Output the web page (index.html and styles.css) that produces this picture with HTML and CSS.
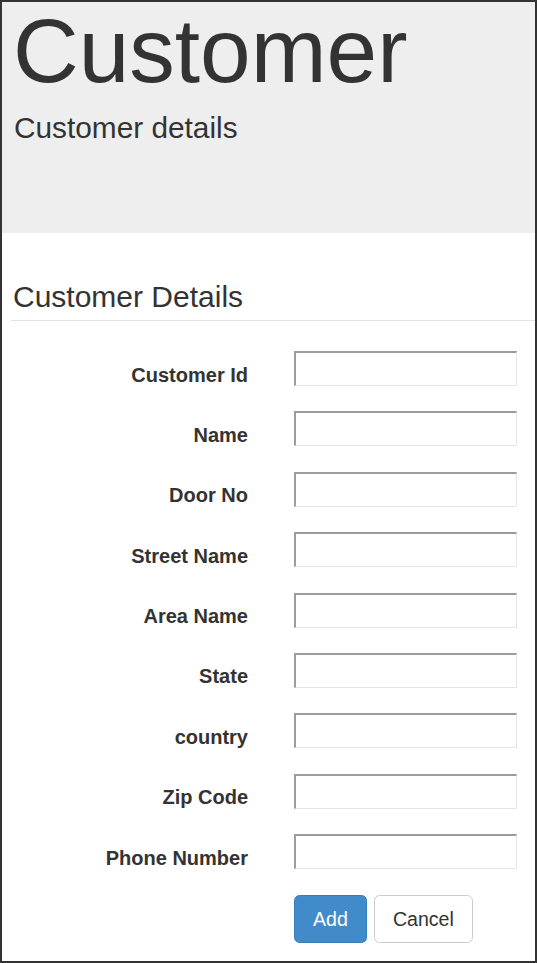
FILE: index.html
```html
<!DOCTYPE html>
<html lang="en">
<head>
    <meta charset="UTF-8">
    <meta name="viewport" content="width=device-width, initial-scale=1.0">
    <title>Customer</title>
    <link rel="stylesheet" href="styles.css">
</head>
<body>
    <div class="page">
        <div class="jumbotron">
            <h1>Customer</h1>
            <p>Customer details</p>
        </div>

        <div class="container">
            <form class="form-horizontal">
                <fieldset>
                    <legend>Customer Details</legend>

                    <div class="form-group">
                        <label class="control-label" for="customerId">Customer Id</label>
                        <input type="text" id="customerId">
                    </div>
                    <div class="form-group">
                        <label class="control-label" for="name">Name</label>
                        <input type="text" id="name">
                    </div>
                    <div class="form-group">
                        <label class="control-label" for="doorNo">Door No</label>
                        <input type="text" id="doorNo">
                    </div>
                    <div class="form-group">
                        <label class="control-label" for="streetName">Street Name</label>
                        <input type="text" id="streetName">
                    </div>
                    <div class="form-group">
                        <label class="control-label" for="areaName">Area Name</label>
                        <input type="text" id="areaName">
                    </div>
                    <div class="form-group">
                        <label class="control-label" for="state">State</label>
                        <input type="text" id="state">
                    </div>
                    <div class="form-group">
                        <label class="control-label" for="country">country</label>
                        <input type="text" id="country">
                    </div>
                    <div class="form-group">
                        <label class="control-label" for="zipCode">Zip Code</label>
                        <input type="text" id="zipCode">
                    </div>
                    <div class="form-group">
                        <label class="control-label" for="phoneNumber">Phone Number</label>
                        <input type="text" id="phoneNumber">
                    </div>

                    <div class="actions">
                        <button type="button" class="btn btn-primary">Add</button>
                        <button type="button" class="btn btn-default">Cancel</button>
                    </div>
                </fieldset>
            </form>
        </div>
    </div>
</body>
</html>
```

FILE: styles.css
```css
html, body {
    margin: 0;
    padding: 0;
    background-color: #fff;
}
body {
    font-family: "Liberation Sans", Arial, sans-serif;
    color: #333;
}
.page {
    width: 537px;
    height: 963px;
    box-sizing: border-box;
    border: 2px solid #333;
}
.jumbotron {
    display: flow-root;
    height: 231px;
    box-sizing: border-box;
    padding: 0 11px;
    background-color: #eee;
}
.jumbotron h1 {
    margin: -1px 0 0;
    font-size: 91px;
    font-weight: normal;
    line-height: 100px;
}
.jumbotron p {
    margin: 7px 0 0;
    padding-left: 1px;
    font-size: 29.8px;
    line-height: 40px;
}
.container {
    padding: 43px 0 0 9px;
}
fieldset {
    margin: 0;
    padding: 0;
    border: 0;
    min-width: 0;
}
legend {
    display: block;
    width: 100%;
    box-sizing: border-box;
    padding: 0 0 2px 2px;
    margin: 0 0 30px;
    font-size: 30px;
    line-height: 42px;
    color: #333;
    border-bottom: 1px solid #e3e3e3;
}
.form-group {
    display: flex;
    align-items: flex-start;
    gap: 46px;
    height: 35px;
    margin-bottom: 25.4px;
}
.control-label {
    width: 237px;
    padding-top: 13.5px;
    text-align: right;
    font-size: 20px;
    font-weight: bold;
    line-height: 20px;
}
.form-group input {
    width: 223px;
    height: 35px;
    box-sizing: border-box;
    margin: 0;
    padding: 0 6px;
    font-size: 18px;
    border-top: 2px solid #9c9c9c;
    border-left: 2px solid #9c9c9c;
    border-right: 1px solid #e6e6e6;
    border-bottom: 1px solid #e6e6e6;
    background-color: #fff;
}
.actions {
    display: flex;
    gap: 7px;
    padding-left: 283px;
    margin-top: 0.6px;
}
.btn {
    padding: 9px 18px;
    font-family: "Liberation Sans", Arial, sans-serif;
    font-size: 19.6px;
    line-height: 28px;
    border: 1px solid transparent;
    border-radius: 5.6px;
    cursor: pointer;
}
.btn-primary {
    background-color: #428bca;
    border-color: #357ebd;
    color: #fff;
}
.btn-default {
    background-color: #fff;
    border-color: #ccc;
    color: #333;
}
```
